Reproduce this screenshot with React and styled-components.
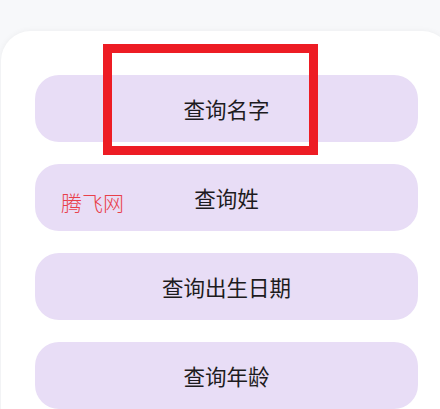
import React from 'react';
import styled, {createGlobalStyle} from 'styled-components';

const GlobalStyle = createGlobalStyle`
  html, body {
    margin: 0;
    padding: 0;
    background: #f7f8fa;
    overflow: hidden;
    font-family: "Noto Sans CJK SC", "Noto Sans", sans-serif;
  }
`

const Page = styled.div`
  position: relative;
  width: 440px;
  height: 409px;
  padding-top: 31px;
  box-sizing: border-box;
  overflow: hidden;
`

const Card = styled.div`
  margin-left: 1px;
  width: 451px;
  min-height: 420px;
  background: #ffffff;
  border-radius: 30px;
  box-shadow: 0 0 6px rgba(0, 0, 0, 0.05);
  padding: 44px 34px 0;
  box-sizing: border-box;
  display: flex;
  flex-direction: column;
  gap: 22px;
`

const QueryButton = styled.button`
  height: 67px;
  width: 100%;
  flex-shrink: 0;
  border: none;
  border-radius: 24px;
  background: #e8ddf6;
  color: #1d1b20;
  font-family: "Noto Sans CJK SC", "Noto Sans", sans-serif;
  font-size: 21.5px;
  display: flex;
  align-items: center;
  justify-content: center;
  padding: 0;
  cursor: pointer;
`

const Highlight = styled.div`
  position: absolute;
  left: 103px;
  top: 44px;
  width: 215px;
  height: 111px;
  border: 9px solid #ed1c24;
  box-sizing: border-box;
  pointer-events: none;
`

const Watermark = styled.span`
  position: absolute;
  left: 61px;
  top: 192px;
  font-size: 21px;
  font-weight: 300;
  line-height: 1;
  color: #e8404a;
  pointer-events: none;
`

const queries = ['查询名字', '查询姓', '查询出生日期', '查询年龄'];

function App() {
    return (
        <Page>
            <GlobalStyle/>
            <Card>
                {queries.map((label) => (
                    <QueryButton key={label}>{label}</QueryButton>
                ))}
            </Card>
            <Highlight/>
            <Watermark>腾飞网</Watermark>
        </Page>
    );
}

export default App;
